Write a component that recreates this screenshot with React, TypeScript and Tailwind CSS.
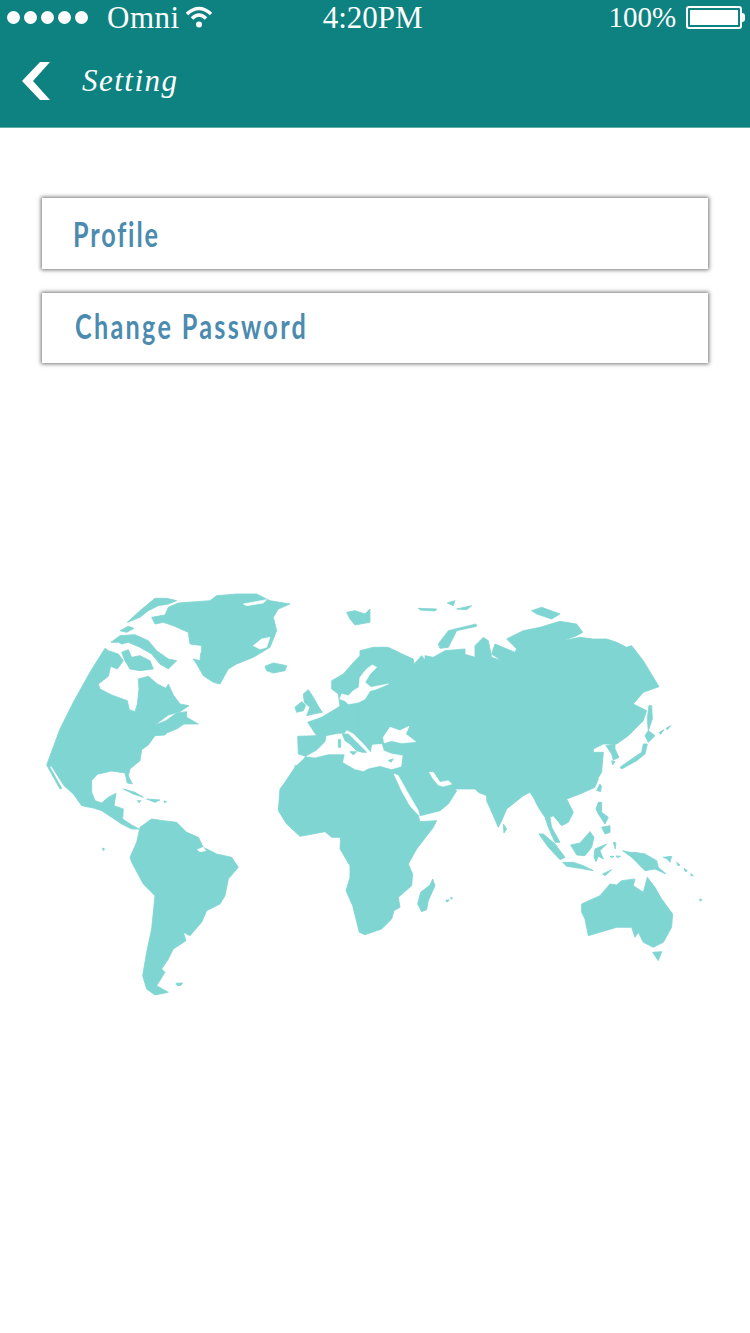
import type { ReactNode } from "react";

const land = "fill-[#7fd5d2] stroke-[#7fd5d2]";

// each crop of the map is traced at 3x, so the points below are in crop units
function Crop({ x, y, children }: { x: number; y: number; children: ReactNode }) {
  return <g transform={`translate(${x} ${y}) scale(0.3333)`}>{children}</g>;
}

function Land({ points }: { points: string[] }) {
  return (
    <>
      {points.map((p) => (
        <polygon key={p} points={p} className={land} strokeWidth="2.5" strokeLinejoin="round" />
      ))}
    </>
  );
}

function Water({ points }: { points: string[] }) {
  return (
    <>
      {points.map((p) => (
        <polygon key={p} points={p} className="fill-white stroke-white" strokeWidth="2" strokeLinejoin="round" />
      ))}
    </>
  );
}

function WorldMap() {
  return (
    <svg viewBox="40 590 670 410" className="ml-[40px] mt-[226px] block h-[410px] w-[670px]">
      {/* Americas */}
      <Crop x={40} y={590}>
        <Land
          points={[
            "20,528 60,420 100,340 150,250 195,178 205,185 235,195 250,215 232,240 212,232 205,262 175,285 180,300 215,318 262,335 268,362 285,368 292,345 297,300 295,270 325,262 352,285 378,298 385,285 400,318 420,345 447,350 420,368 385,378 345,408 378,395 410,372 440,368 440,385 475,405 432,405 410,420 380,432 375,438 345,440 325,468 305,482 300,515 270,540 265,560 277,585 262,582 255,552 215,546 172,556 155,575 155,610 165,635 185,642 205,625 228,613 222,650 250,660 248,690 275,708 297,720 275,720 245,705 215,685 185,665 160,657 125,650 100,615 72,590 35,532 28,532 65,598 60,600",
            "262,100 300,65 345,28 380,28 410,35 385,45 355,50 325,65 300,85",
            "240,125 265,112 282,118 260,130",
            "213,160 240,140 285,137 325,155 350,185 385,210 410,215 385,240 360,225 335,195 300,175 265,160 245,165 235,160",
            "245,190 265,182 275,205 300,200 330,215 340,240 300,245 270,240 255,215",
            "335,85 375,78 385,55 415,42 470,38 510,35 530,20 590,15 650,15 690,35 750,45 715,60 700,85 710,125 690,175 640,205 590,225 565,240 540,285 520,280 490,260 470,225 460,210 480,215 485,170 450,165 445,130 400,110 370,100 345,105",
            "675,232 700,222 740,230 735,245 700,252 680,245",
            "920,70 945,65 975,75 990,60 990,100 945,108 930,90",
          ]}
        />
        <Water
          points={[
            "610,45 680,32 670,42 620,50",
            "640,170 665,150 690,145 680,175 660,180",
            "455,172 482,172 482,190 458,192",
          ]}
        />
      </Crop>
      <Crop x={40} y={790}>
        <Land
          points={[
            "300,115 335,90 370,95 410,100 440,130 475,145 490,175 530,195 575,205 595,235 565,270 555,320 540,345 500,365 485,400 450,440 430,430 438,455 400,480 385,510 365,540 375,550 350,590 385,610 345,618 320,600 308,560 320,490 335,420 345,320 310,285 275,220 270,205 290,160",
            "250,0 285,10 310,25 280,15",
            "320,30 360,33 345,40",
            "292,35 302,35 298,41",
            "372,36 380,38 374,41",
            "408,583 428,582 422,590 412,590",
            "187,177 194,180 190,185",
          ]}
        />
        <Water points={["472,182 490,175 497,185 480,188"]} />
      </Crop>

      {/* Europe, Africa and Asia: land first, seas on top */}
      <Crop x={285} y={620}>
        <Land
          points={[
            "38,352 95,350 68,310 110,295 165,262 160,225 140,210 140,185 175,165 210,125 240,95 290,85 330,95 380,120 388,130 355,135 330,125 330,140 360,160 385,150 405,130 420,125 420,110 445,115 480,95 540,90 540,400 440,500 370,540 0,540 0,490 30,445 58,418 62,412 40,405",
            "55,225 70,212 85,235 100,262 112,280 85,285 65,290 75,265 58,250",
            "30,265 50,248 62,258 55,275 35,280",
          ]}
        />
      </Crop>
      <Crop x={360} y={590}>
        <Land
          points={[
            "0,185 40,175 85,175 125,195 160,210 160,228 185,200 200,220 240,200 295,190 345,205 345,170 370,145 385,155 395,205 425,215 395,195 405,165 465,190 470,180 440,150 490,125 540,115 600,97 650,105 668,130 650,140 610,155 660,145 700,150 740,150 770,160 800,175 815,170 850,215 897,293 850,310 820,345 860,365 850,395 805,440 770,465 730,465 700,480 700,490 730,490 725,550 700,590 690,600 0,600",
            "235,165 265,125 348,105 350,112 290,125 265,175 240,178",
            "175,58 230,60 225,66 180,63",
            "262,42 285,35 280,50",
            "290,60 335,50 320,62",
            "515,65 545,55 600,75 575,90 530,75",
            "710,605 720,585 722,600",
          ]}
        />
      </Crop>
      <Crop x={360} y={780}>
        <Land
          points={[
            "715,0 705,25 660,45 620,60 640,100 625,130 605,140 580,110 570,115 575,145 600,190 585,190 565,145 555,115 535,85 520,55 510,40 490,50 440,90 425,125 415,145 400,110 380,65 380,50 355,40 335,18 275,2 262,8 290,35 265,75 240,95 190,108 178,110 110,110 110,-60 600,-60",
            "430,135 440,150 432,162",
            "665,375 720,350 750,315 770,318 785,305 825,300 820,320 850,340 862,295 885,325 905,360 938,405 935,445 910,490 880,505 850,490 835,460 825,475 815,445 770,445 685,470 675,420 665,400",
            "878,520 905,518 895,545",
            "1018,360 1026,362 1021,367",
            "258,365 268,362 262,369",
          ]}
        />
      </Crop>
      <Crop x={270} y={770}>
        <Land
          points={[
            "75,0 30,60 25,125 50,165 90,202 165,188 185,205 212,205 210,240 240,290 240,325 228,365 248,410 268,490 285,497 335,480 365,450 372,425 390,415 385,385 425,350 428,315 415,285 440,240 490,175 500,155 450,158 445,140 380,20 380,-10 75,-10",
            "488,330 495,350 475,395 470,422 455,428 443,405 452,370 480,348",
            "528,393 535,395 530,399",
            "542,385 548,387 544,391",
          ]}
        />
        <Water
          points={[
            "372,15 385,20 410,65 445,125 448,140 438,130 420,110 395,65",
            "478,10 490,10 510,40 535,35 545,45 520,52 505,48 490,30",
          ]}
        />
      </Crop>
      <Crop x={285} y={620}>
        <Water
          points={[
            "65,412 95,395 122,368 125,352 160,345 178,345 185,335 205,345 235,375 258,402 262,378 290,376 296,395 320,405 352,410 348,442 320,450 285,440 250,448 235,456 210,450 175,430 180,405 130,405 90,415",
            "295,355 315,325 345,335 372,322 362,345 392,368 350,372 320,365 298,372",
            "262,138 275,145 255,165 240,190 258,205 310,195 275,210 255,215 240,240 220,250 190,255 180,245 165,240 170,225 190,230 205,215 222,205 225,175 245,150",
          ]}
        />
        <Land
          points={[
            "172,345 190,345 220,375 245,400 232,400 215,395 195,375 180,365",
            "160,362 167,362 167,385 160,385",
            "195,398 215,398 205,408",
            "310,424 325,420 318,430",
          ]}
        />
      </Crop>
      <Crop x={570} y={680}>
        <Land
          points={[
            "135,195 108,200 125,225 130,243 147,235 135,210",
            "150,265 185,240 215,220 220,195 232,195 225,225 200,245 155,270",
            "125,245 135,248 128,258",
            "225,170 235,155 255,170 235,190",
            "237,80 245,80 247,120 235,155 232,120",
            "268,160 282,152 272,166",
            "288,148 302,140 292,152",
          ]}
        />
      </Crop>
      <Crop x={530} y={770}>
        <Land
          points={[
            "27,195 40,195 75,225 105,265 90,272 55,235",
            "98,280 130,280 160,290 190,305 150,298 110,292",
            "122,228 150,222 180,188 192,205 185,235 165,260 140,258",
            "195,240 230,225 210,245 220,270 205,262 198,278 192,265",
            "205,100 215,100 215,130 235,145 225,165 205,135 198,120",
            "215,175 240,170 240,190 225,195",
            "278,245 300,250 315,250 345,255 380,275 385,295 408,315 375,300 345,305 320,280 305,265",
            "210,48 214,50 212,68 203,65",
            "218,315 245,302 225,320",
            "250,220 258,222 256,240",
            "240,262 252,262 246,266",
            "258,261 272,262 262,266",
            "400,265 425,262 420,280 412,270",
            "440,280 450,288 444,290",
            "462,298 472,305 466,308",
            "482,314 490,320 484,321",
          ]}
        />
      </Crop>
    </svg>
  );
}

function WifiIcon() {
  return (
    <svg viewBox="0 0 26 22" className="ml-[6px] h-[22px] w-[26px]">
      <path d="M1 8 Q13 -3 25 8" fill="none" stroke="white" strokeWidth="3.5" />
      <path d="M6 12.5 Q13 5.5 20 12.5" fill="none" stroke="white" strokeWidth="3.5" />
      <circle cx="13" cy="18.5" r="3" fill="white" />
    </svg>
  );
}

const rows = ["Profile", "Change Password"];

export default function App() {
  return (
    <div className="min-h-[1333px] w-[750px] bg-white">
      <header className="h-[128px] border-b border-[#5fb0ad] bg-[#0e8280] text-white">
        {/* Status bar */}
        <div className="flex h-[34px] items-center font-['Liberation_Serif',serif]">
          <div className="ml-[7px] flex gap-[4px]">
            {[0, 1, 2, 3, 4].map((i) => (
              <span key={i} className="h-[13px] w-[13px] rounded-full bg-white" />
            ))}
          </div>
          <span className="ml-[19px] text-[31px] leading-none tracking-[0.5px]">Omni</span>
          <WifiIcon />
          <span className="ml-[111px] text-[31px] leading-none">4:20PM</span>
          <span className="ml-[186px] text-[29px] leading-none">100%</span>
          <div className="ml-[10px] flex items-center">
            <div className="h-[23px] w-[56px] rounded-[3px] border-2 border-white p-[2px]">
              <div className="h-full w-full bg-white" />
            </div>
            <span className="h-[9px] w-[3px] rounded-r-sm bg-white" />
          </div>
        </div>

        {/* Nav bar */}
        <div className="mt-[26px] flex items-center">
          <svg viewBox="0 0 28 38" className="ml-[22px] mt-[2px] h-[38px] w-[28px]">
            <polygon points="18,0 28,0 11,19 28,38 18,38 0,19" fill="white" />
          </svg>
          <span className="ml-[32px] font-['Liberation_Serif',serif] text-[31px] italic leading-none tracking-[1.5px]">
            Setting
          </span>
        </div>
      </header>

      <div className="flex flex-col gap-[24px] px-[42px] pt-[70px]">
        <div className="flex h-[71px] items-center bg-white pl-[31px] shadow-[0_0_4px_1px_rgba(0,0,0,0.55)]">
          <span className="origin-left scale-x-[0.72] whitespace-nowrap font-['Lato',sans-serif] text-[35px] font-bold leading-none tracking-[2.6px] text-[#4b8bb0]">
            {rows[0]}
          </span>
        </div>
        <div className="flex h-[70px] items-center bg-white pb-[5px] pl-[33px] shadow-[0_0_4px_1px_rgba(0,0,0,0.55)]">
          <span className="origin-left scale-x-[0.72] whitespace-nowrap font-['Lato',sans-serif] text-[35px] font-bold leading-none tracking-[3.2px] text-[#4b8bb0]">
            {rows[1]}
          </span>
        </div>
      </div>

      <WorldMap />
    </div>
  );
}
